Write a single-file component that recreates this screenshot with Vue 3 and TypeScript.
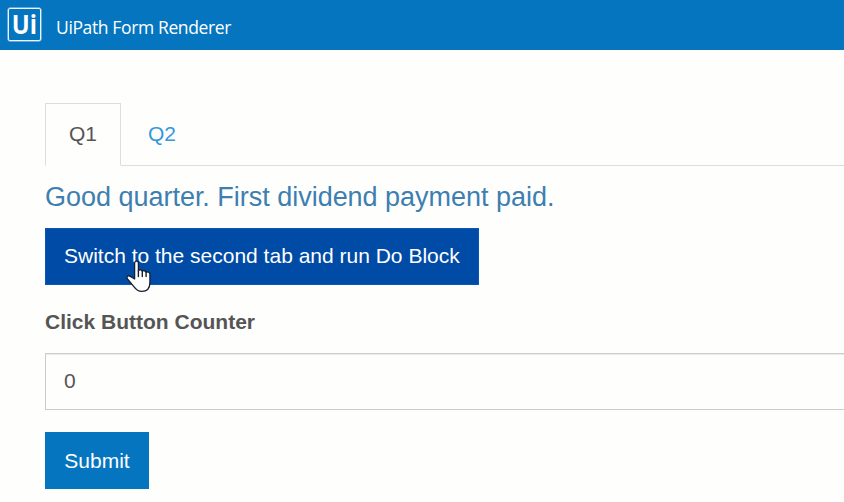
<script setup lang="ts">
import { ref } from 'vue'

interface QuarterTab {
  id: string
  message: string
}

const tabs: QuarterTab[] = [
  { id: 'Q1', message: 'Good quarter. First dividend payment paid.' },
  { id: 'Q2', message: '' },
]
const active = ref<string>('Q1')
const counter = ref<string>('0')

function runBlock(): void {
  active.value = 'Q2'
  counter.value = String(Number(counter.value) + 1)
}
</script>

<template>
  <div class="page">
    <header class="bar">
      <div class="logo"><span class="logo-text">Ui</span></div>
      <span class="title">UiPath Form Renderer</span>
    </header>
    <main class="form">
      <nav class="tabs">
        <a v-for="tab in tabs" :key="tab.id" class="tab" :class="{ active: tab.id === active }" @click="active = tab.id">{{ tab.id }}</a>
      </nav>
      <p class="message">{{ tabs.find((t) => t.id === active)?.message }}</p>
      <button class="btn switch" type="button" @click="runBlock">Switch to the second tab and run Do Block</button>
      <label class="label" for="counter">Click Button Counter</label>
      <input id="counter" v-model="counter" class="field" type="text" />
      <button class="btn submit" type="button">Submit</button>
    </main>
    <svg class="cursor" width="27" height="34" viewBox="0 0 27 34">
      <path d="M8.6 20V4.2c0-2.7 3.8-2.7 3.8 0v7.6c.5-1.3 3.7-1.3 3.9.6.7-1.2 3.6-.9 3.8 1 .9-1 3.8-.6 3.8 1.7v8.4c0 5.3-2.7 8.9-8.2 8.9-3.4 0-5.6-1.6-7.6-4.5L1.5 20c-1.5-2.3.7-4.2 3-2.6z" fill="#fff" stroke="#17202e" stroke-width="1.3" stroke-linejoin="round" />
      <path d="M12.4 11.5v6M16.3 12.6v5M20.1 13.6v4" fill="none" stroke="#17202e" stroke-width="1.4" stroke-linecap="round" />
    </svg>
  </div>
</template>

<style>
body {
  overflow: hidden;
  background: #fefefd;
}
</style>

<style scoped>
.page {
  position: relative;
  height: 502px;
  overflow: hidden;
  font-family: "Liberation Sans", Arial, sans-serif;
  font-size: 21px;
  line-height: 30px;
  color: #555;
}
.page * {
  box-sizing: border-box;
}
.bar {
  display: flex;
  align-items: flex-start;
  height: 50px;
  padding: 8px 0 0 8px;
  background: #0575bf;
  color: #fff;
}
.logo {
  display: flex;
  justify-content: center;
  width: 33px;
  height: 33px;
  border: 1px solid #eef8ff;
  border-radius: 2px;
  box-shadow: 0 0 0 0.5px #b9dcf4;
}
.logo-text {
  font-family: "Open Sans", sans-serif;
  font-size: 27px;
  font-weight: 700;
  line-height: 30px;
  transform: scaleX(0.88);
}
.title {
  margin: 4px 0 0 15px;
  font-family: "Open Sans", sans-serif;
  font-size: 17.5px;
  letter-spacing: -0.37px;
  white-space: nowrap;
}
.form {
  width: 900px;
  padding: 53px 0 0 45px;
}
.tabs {
  display: flex;
  gap: 3px;
  height: 63px;
  border-bottom: 1px solid #ddd;
}
.tab {
  height: 63px;
  padding: 15px 23px;
  border: 1px solid transparent;
  color: #3498db;
  cursor: pointer;
}
.tab.active {
  border-color: #ddd;
  border-bottom-color: #fefefd;
  color: #555;
}
.message {
  height: 38px;
  margin: 12px 0;
  color: #3d7fb0;
  font-size: 27px;
  line-height: 38px;
  letter-spacing: -0.02px;
}
.btn {
  display: block;
  height: 57px;
  margin: 0;
  padding: 0 18px 1px;
  border: 1px solid #0575bf;
  background: #0575bf;
  color: #fff;
  font: inherit;
  cursor: pointer;
}
.switch {
  border-color: #0758b8;
  background: #004ba5;
}
.submit {
  width: 104px;
  padding-top: 1px;
  padding-bottom: 0;
}
.label {
  display: block;
  margin: 22px 0 16px;
  font-weight: 700;
}
.field {
  display: block;
  width: 100%;
  height: 57px;
  margin: 0 0 22px;
  padding: 0 18px 1px;
  border: 1px solid #ccc;
  border-radius: 0;
  outline: none;
  background: #fefefd;
  box-shadow: inset 0 1px 1px rgba(0, 0, 0, 0.075);
  color: #555;
  font: inherit;
}
.cursor {
  position: absolute;
  top: 259px;
  left: 126px;
}
</style>
